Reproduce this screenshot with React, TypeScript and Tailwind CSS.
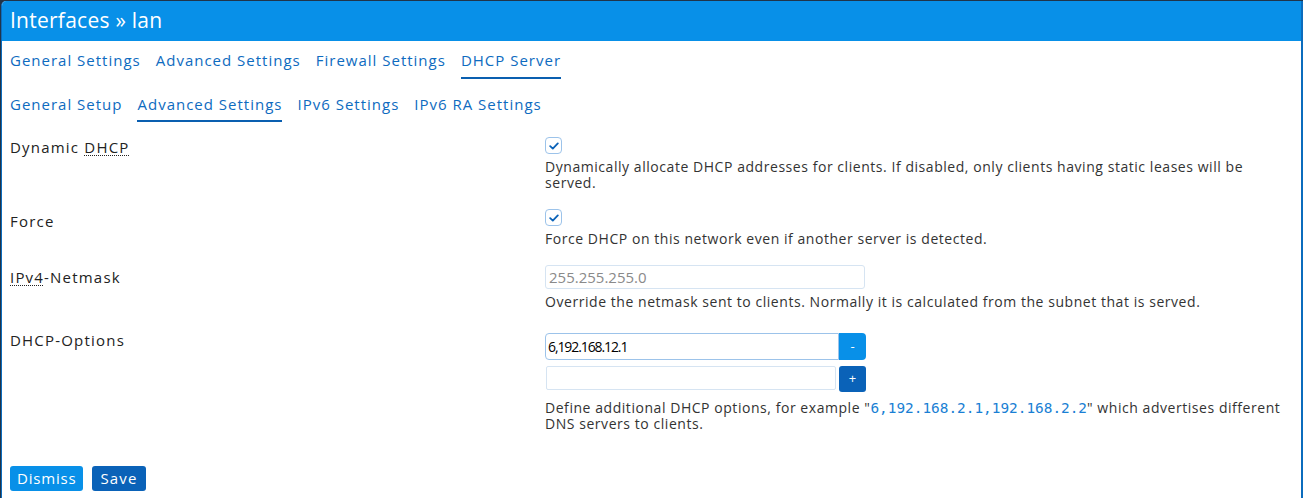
import React from 'react';

const font = { fontFamily: '"Open Sans", "Liberation Sans", sans-serif' };

const Abbr = ({ children }: { children: React.ReactNode }) => (
  <span className="underline decoration-dotted decoration-1 underline-offset-2">{children}</span>
);

const Check = () => (
  <div className="w-[17px] h-[17px] rounded-[4px] border border-[#9cc3ea] bg-white flex items-center justify-center">
    <svg width="10" height="8" viewBox="0 0 10 8" fill="none">
      <path d="M1.2 4.2 L3.8 6.6 L8.8 1.4" stroke="#0a62b8" strokeWidth="1.8" strokeLinecap="round" strokeLinejoin="round" />
    </svg>
  </div>
);

const Tab = ({ label, active }: { label: string; active?: boolean }) => (
  <div className={`pb-[5px] border-b-2 ${active ? 'border-[#0a5fb0]' : 'border-transparent'}`}>{label}</div>
);

const Row = ({ label, children }: { label: React.ReactNode; children: React.ReactNode }) => (
  <div className="flex">
    <div className="w-[535px] shrink-0 text-[15px] text-[#222] tracking-[1.2px] pt-[6px]">{label}</div>
    <div className="flex-1 pr-[12px]">{children}</div>
  </div>
);

const Desc = ({ children, extra = '' }: { children: React.ReactNode; extra?: string }) => (
  <div className={`text-[14px] leading-[16px] text-[#333] tracking-[0.55px] ${extra || 'mt-[5px]'}`}>{children}</div>
);

export default function App() {
  return (
    <div className="w-[1303px] h-[498px] bg-[#203449] pt-px pl-px overflow-hidden" style={font}>
      <div className="h-full bg-white rounded-tl-[5px] border-l border-r-2 border-[#0b6cbd] overflow-hidden flex flex-col">
        <div className="h-[40px] bg-[#0890e8] flex items-center px-[8px] text-white text-[21px] tracking-[0.25px]">
          Interfaces » lan
        </div>

        <div className="flex gap-[15px] px-[8px] pt-[8px] text-[15px] text-[#0e6bc0] tracking-[1px]">
          <Tab label="General Settings" />
          <Tab label="Advanced Settings" />
          <Tab label="Firewall Settings" />
          <Tab label="DHCP Server" active />
        </div>

        <div className="flex gap-[15px] px-[8px] pt-[14px] text-[15px] text-[#0e6bc0] tracking-[1px]">
          <Tab label="General Setup" />
          <Tab label="Advanced Settings" active />
          <Tab label="IPv6 Settings" />
          <Tab label="IPv6 RA Settings" />
        </div>

        <div className="px-[8px] pt-[8px] flex flex-col gap-[13px]">
          <Row label={<>Dynamic <Abbr>DHCP</Abbr></>}>
            <div className="pt-[7px]"><Check /></div>
            <Desc>
              Dynamically allocate DHCP addresses for clients. If disabled, only clients having static leases will be
              served.
            </Desc>
          </Row>

          <Row label="Force">
            <div className="pt-[5px]"><Check /></div>
            <Desc>Force DHCP on this network even if another server is detected.</Desc>
          </Row>

          <Row label={<><Abbr>IPv4</Abbr>-Netmask</>}>
            <div className="pt-[5px]">
              <div className="w-[320px] h-[24px] border border-[#d6e4f2] rounded-[3px] flex items-center px-[3px] text-[15px] text-[#8a8a8a]">
                255.255.255.0
              </div>
            </div>
            <Desc>Override the netmask sent to clients. Normally it is calculated from the subnet that is served.</Desc>
          </Row>

          <Row label="DHCP-Options">
            <div className="flex flex-col gap-[6px] pt-[10px]">
              <div className="flex w-[321px] h-[27px]">
                <div className="flex-1 border border-[#9cc3ea] rounded-l-[4px] flex items-center px-[2px] text-[14px] text-black tracking-[-1.1px]">
                  6,192.168.12.1
                </div>
                <div className="w-[27px] bg-[#0890e8] rounded-r-[4px] text-white text-[13px] flex items-center justify-center">-</div>
              </div>
              <div className="flex w-[321px] h-[26px] gap-[3px]">
                <div className="flex-1 border border-[#d6e4f2] rounded-[2px] ml-px h-[24px]"></div>
                <div className="w-[27px] bg-[#0a62b8] rounded-[3px] text-white text-[13px] flex items-center justify-center">+</div>
              </div>
            </div>
            <Desc extra="mt-[8px]">
              Define additional DHCP options, for example "<span className="text-[#1a7fd4] text-[14.4px] tracking-normal" style={{ fontFamily: '"DejaVu Sans Mono", monospace' }}>6,192.168.2.1,192.168.2.2</span>" which advertises different
              DNS servers to clients.
            </Desc>
          </Row>
        </div>

        <div className="flex gap-[9px] px-[8px] mt-auto mb-[7px] tracking-[0.8px]">
          <div className="h-[25px] px-[7px] bg-[#0890e8] text-white text-[15px] rounded-[3px] flex items-center">Dismiss</div>
          <div className="h-[25px] px-[8px] bg-[#0a62b8] text-white text-[15px] tracking-[1.2px] rounded-[3px] flex items-center">Save</div>
        </div>
      </div>
    </div>
  );
}
